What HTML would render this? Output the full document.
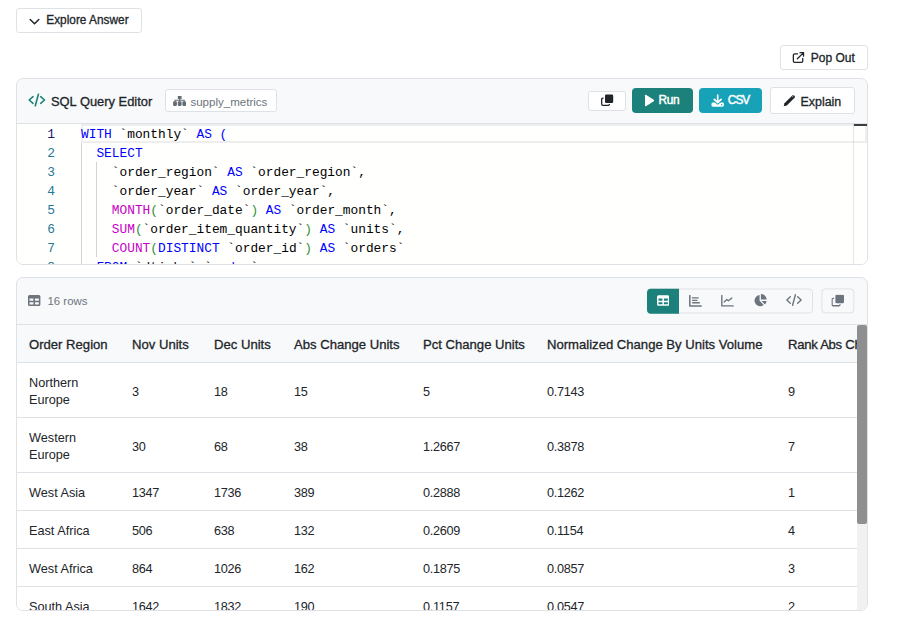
<!DOCTYPE html>
<html>
<head>
<meta charset="utf-8">
<style>
*{box-sizing:border-box;}
domain{display:none;}
html,body{margin:0;padding:0;background:#fff;}
body{width:901px;height:634px;overflow:hidden;position:relative;font-family:"Liberation Sans",sans-serif;color:#212529;font-size:13px;}
.abs{position:absolute;}
.btn{position:absolute;border:1px solid #dee2e6;border-radius:3px;background:#fff;white-space:nowrap;color:#212529;}
.t{position:absolute;white-space:nowrap;line-height:1;}
.sb{font-weight:normal;-webkit-text-stroke:0.3px;}
.card{position:absolute;left:16px;width:852px;border:1px solid #dee2e6;border-radius:7px;background:#f8f9fa;overflow:hidden;}
/* editor */
.ed{position:absolute;left:0;top:45px;width:850px;height:141px;background:#fffffe;font-family:"Liberation Mono",monospace;font-size:12.83px;}
.ln{position:absolute;left:0;width:38px;text-align:right;color:#237893;height:19px;line-height:19px;margin-top:1px;}
.cl{position:absolute;left:64px;height:19px;line-height:19px;white-space:pre;color:#000;margin-top:1px;}
.k{color:#0000ff;}
.f{color:#c700c7;}
.p{color:#319331;}
.g{position:absolute;width:1px;background:#d3d3d3;}
/* table */
.th{position:absolute;top:1px;height:37px;line-height:37px;font-weight:normal;-webkit-text-stroke:0.3px;white-space:nowrap;color:#212529;}
.row{position:absolute;left:0;width:840px;border-bottom:1px solid #dee2e6;background:#fff;}
.c{position:absolute;margin-top:2px;white-space:nowrap;line-height:17px;color:#212529;letter-spacing:-0.28px;}
.c.x{letter-spacing:0;}
</style>
</head>
<body>

<!-- Explore Answer -->
<div class="btn" style="left:16px;top:8px;width:126px;height:25px;">
  <svg class="abs" style="left:11.6px;top:8.85px;" width="11" height="8" viewBox="0 0 11 8"><path d="M1.2 1.5 L5.5 5.8 L9.8 1.5" fill="none" stroke="#212529" stroke-width="1.5" stroke-linecap="round" stroke-linejoin="round"/></svg>
  <span class="t sb" id="t_explore" style="left:29.3px;top:6.4px;font-size:11.85px;">Explore Answer</span>
</div>

<!-- Pop Out -->
<div class="btn" style="left:780px;top:45px;width:88px;height:25px;">
  <svg class="abs" style="left:11px;top:5px;" width="13" height="13" viewBox="0 0 13 13"><path d="M5.6 2.95 H2.75 Q1.35 2.95 1.35 4.35 V9.95 Q1.35 11.35 2.75 11.35 H9.35 Q10.75 11.35 10.75 9.95 V7.4" fill="none" stroke="#212529" stroke-width="1.3" stroke-linecap="round"/><path d="M8 1.65 H11.55 V5.2 M11.3 1.9 L5.4 7.8" fill="none" stroke="#212529" stroke-width="1.3" stroke-linecap="round" stroke-linejoin="round"/></svg>
  <span class="t sb" id="t_pop" style="left:29.8px;top:5.5px;font-size:12px;">Pop Out</span>
</div>

<!-- SQL card -->
<div class="card" style="top:78px;height:187px;">
  <div class="abs" style="left:0;top:0;width:850px;height:45px;border-bottom:1px solid #dee2e6;"></div>
  <svg class="abs" style="left:11px;top:14px;" width="18" height="14" viewBox="0 0 18 14"><path d="M5 3.7 L1.2 7 L5 10.3 M12.7 3.7 L16.5 7 L12.7 10.3 M10.4 1.2 L7.3 12.8" fill="none" stroke="#1b817a" stroke-width="1.6" stroke-linecap="round" stroke-linejoin="round"/></svg>
  <span class="t sb" id="t_sql" style="left:34px;top:16.6px;font-size:12.9px;">SQL Query Editor</span>
  <div class="abs" style="left:148px;top:10px;width:112px;height:23px;border:1px solid #dee2e6;border-radius:3px;background:#fff;">
    <svg class="abs" style="left:7px;top:6px;" width="13.2" height="10" viewBox="0 0 13.2 10"><path d="M4.8 0h3.8v3h-3.8z M6.15 2.9h1.1v2.6h-1.1z M1.5 3.8h10.3v1h-10.3z M1.5 3.8h1v1.8h-1z M10.8 3.8h1v1.8h-1z" fill="#646c74"/><rect x=".1" y="5.3" width="3.8" height="4.7" rx="1.2" fill="#646c74"/><rect x="4.8" y="5.3" width="3.8" height="4.7" rx="1.2" fill="#646c74"/><rect x="9.4" y="5.3" width="3.8" height="4.7" rx="1.2" fill="#646c74"/></svg>
    <span class="t" id="t_badge" style="left:24.4px;top:6.7px;font-size:11.55px;color:#6c757d;">supply_metrics</span>
  </div>

  <!-- copy btn -->
  <div class="abs" style="left:571px;top:12px;width:38px;height:20px;border:1px solid #dee2e6;border-radius:3px;background:#fff;">
    <svg class="abs" style="left:12px;top:2px;" width="13" height="13" viewBox="0 0 13 13"><rect x="4" y=".4" width="8.2" height="8.6" rx="1.3" fill="#212529"/><path d="M2.6 4.2 H1.9 Q.65 4.2 .65 5.45 V10.1 Q.65 11.35 1.9 11.35 H7.2 Q8.45 11.35 8.45 10.1 V9.9" fill="none" stroke="#212529" stroke-width="1.3"/></svg>
  </div>
  <!-- Run -->
  <div class="abs" style="left:615px;top:9px;width:61px;height:25px;border-radius:4px;background:#1b817a;">
    <svg class="abs" style="left:11.8px;top:6px;" width="11" height="13" viewBox="0 0 11 13"><path d="M1 1.3 Q1 .3 1.9 .8 L9.8 5.7 Q10.6 6.5 9.8 7.3 L1.9 12.2 Q1 12.7 1 11.7 Z" fill="#fff"/></svg>
    <span class="t sb" id="t_run" style="left:26.5px;top:7.2px;font-size:11.9px;letter-spacing:-0.35px;color:#fff;-webkit-text-stroke:0.45px;">Run</span>
  </div>
  <!-- CSV -->
  <div class="abs" style="left:682px;top:9px;width:63px;height:25px;border-radius:4px;background:#17a2b8;">
    <svg class="abs" style="left:12px;top:6px;" width="13" height="13" viewBox="0 0 13 13"><path d="M1.9 8.6 H11.5 Q12.9 8.6 12.9 10 V11.3 Q12.9 12.7 11.5 12.7 H1.9 Q.5 12.7 .5 11.3 V10 Q.5 8.6 1.9 8.6Z" fill="#fff"/><path d="M6.7 1 V8.4 M3.3 5.3 L6.7 8.7 L10.1 5.3" fill="none" stroke="#17a2b8" stroke-width="3.4" stroke-linecap="round" stroke-linejoin="round"/><path d="M6.7 1 V8.4 M3.3 5.3 L6.7 8.7 L10.1 5.3" fill="none" stroke="#fff" stroke-width="1.7" stroke-linecap="round" stroke-linejoin="round"/><circle cx="10.7" cy="10.8" r=".7" fill="#17a2b8"/></svg>
    <span class="t sb" id="t_csv" style="left:28.8px;top:7.2px;font-size:11.9px;letter-spacing:-1px;color:#fff;-webkit-text-stroke:0.45px;">CSV</span>
  </div>
  <!-- Explain -->
  <div class="btn" style="left:753px;top:8px;width:85px;height:27px;">
    <svg class="abs" style="left:12px;top:6.2px;" width="13" height="13" viewBox="0 0 13 13"><path d="M.7 12.3 L1.5 9.2 L9.3 1.4 Q10.2 .6 11.1 1.4 L11.6 1.9 Q12.4 2.8 11.6 3.7 L3.8 11.5 Z" fill="#212529"/><path d="M9.2 3 L10.4 1.9" stroke="#cfd2d5" stroke-width=".7" fill="none" stroke-linecap="round"/></svg>
    <span class="t sb" id="t_explain" style="left:29.5px;top:7.9px;font-size:12.41px;">Explain</span>
  </div>

  <!-- Editor -->
  <div class="ed" id="editor">
    <div class="abs" style="left:64px;top:0;width:786px;height:19px;border:2px solid #eeeeee;"></div>
    <div class="g" style="left:64px;top:19px;height:122px;"></div>
    <div class="g" style="left:79px;top:38px;height:95px;"></div>
    <div class="ln" style="top:0;color:#0b216f;">1</div>
    <div class="ln" style="top:19px;">2</div>
    <div class="ln" style="top:38px;">3</div>
    <div class="ln" style="top:57px;">4</div>
    <div class="ln" style="top:76px;">5</div>
    <div class="ln" style="top:95px;">6</div>
    <div class="ln" style="top:114px;">7</div>
    <div class="ln" style="top:133px;">8</div>
    <div class="cl" style="top:0;"><span class="k">WITH</span> `monthly` <span class="k">AS</span> <span class="k">(</span></div>
    <div class="cl" style="top:19px;">  <span class="k">SELECT</span></div>
    <div class="cl" style="top:38px;">    `order_region` <span class="k">AS</span> `order_region`,</div>
    <div class="cl" style="top:57px;">    `order_year` <span class="k">AS</span> `order_year`,</div>
    <div class="cl" style="top:76px;">    <span class="f">MONTH</span><span class="p">(</span>`order_date`<span class="p">)</span> <span class="k">AS</span> `order_month`,</div>
    <div class="cl" style="top:95px;">    <span class="f">SUM</span><span class="p">(</span>`order_item_quantity`<span class="p">)</span> <span class="k">AS</span> `units`,</div>
    <div class="cl" style="top:114px;">    <span class="f">COUNT</span><span class="p">(</span><span class="k">DISTINCT</span> `order_id`<span class="p">)</span> <span class="k">AS</span> `orders`</div>
    <div class="cl" style="top:133px;">  <span class="k">FROM</span> `dtimbr`.`<span class="k">order</span>`</div>
    <!-- overview ruler -->
    <div class="abs" style="left:836px;top:0;width:1px;height:141px;background:rgba(127,127,127,.2);"></div>
    <div class="abs" style="left:837px;top:0;width:13px;height:2px;background:#3c3c3c;"></div>
  </div>
</div>

<!-- Results card -->
<div class="card" style="top:277px;height:334px;">
  <div class="abs" style="left:0;top:0;width:850px;height:47px;border-bottom:1px solid #dee2e6;"></div>
  <svg class="abs" style="left:11.2px;top:17.1px;" width="12.4" height="11" viewBox="0 0 13 11" preserveAspectRatio="none"><path d="M1.6 0 H11.4 Q13 0 13 1.6 V9.4 Q13 11 11.4 11 H1.6 Q0 11 0 9.4 V1.6 Q0 0 1.6 0 Z M1.6 3.4 V5.7 H5.7 V3.4 Z M7.3 3.4 V5.7 H11.4 V3.4 Z M1.6 7.2 V9.4 H5.7 V7.2 Z M7.3 7.2 V9.4 H11.4 V7.2 Z" fill="#6c757d" fill-rule="evenodd"/></svg>
  <span class="t" id="t_rows" style="left:30.5px;top:17.5px;font-size:11.42px;color:#6c757d;">16 rows</span>

  <!-- toolbar group -->
  <div class="abs" style="left:630px;top:10px;transform:translateY(.5px);width:166px;height:25px;border:1px solid #dee2e6;border-radius:4px;background:#f8f9fa;"></div>
  <div class="abs" style="left:630px;top:10px;transform:translateY(.7px);width:32px;height:24.5px;border-radius:4px 0 0 4px;background:#1b817a;"></div>
  <div class="abs" id="tg" style="left:631px;top:11.5px;width:0;height:0;">
    <svg class="abs" style="left:8.8px;top:5.4px;" width="12.4" height="11.2" viewBox="0 0 13 11"><path d="M1.6 0 H11.4 Q13 0 13 1.6 V9.4 Q13 11 11.4 11 H1.6 Q0 11 0 9.4 V1.6 Q0 0 1.6 0 Z M1.6 3.4 V5.7 H5.7 V3.4 Z M7.3 3.4 V5.7 H11.4 V3.4 Z M1.6 7.2 V9.4 H5.7 V7.2 Z M7.3 7.2 V9.4 H11.4 V7.2 Z" fill="#fff" fill-rule="evenodd"/></svg>
    <svg class="abs" style="left:40.7px;top:5px;" width="13" height="12" viewBox="0 0 13 12"><path d="M.8 .5 V10.9 H12.2" fill="none" stroke="#6c757d" stroke-width="1.5" stroke-linecap="round" stroke-linejoin="round"/><path d="M3.4 2.9 H9.2 M3.6 5.3 H8 M3.6 7.7 H10.4" fill="none" stroke="#6c757d" stroke-width="1.35" stroke-linecap="round"/></svg>
    <svg class="abs" style="left:72.8px;top:5px;" width="13" height="12" viewBox="0 0 13 12"><path d="M.8 .5 V10.9 H12.2" fill="none" stroke="#6c757d" stroke-width="1.4" stroke-linecap="round" stroke-linejoin="round"/><path d="M3.2 6.9 L5.8 4.4 L7.5 5.8 L10.8 3" fill="none" stroke="#6c757d" stroke-width="1.35" stroke-linecap="round" stroke-linejoin="round"/></svg>
    <svg class="abs" style="left:105.7px;top:4.8px;" width="13" height="13" viewBox="0 0 13 13"><path d="M5.6 1 A5.6 5.6 0 1 0 9.7 10.9 L5.6 6.8 Z" fill="#6c757d"/><path d="M6.9 0 A5.8 5.8 0 0 1 12.7 5.6 H6.9 Z" fill="#6c757d"/><path d="M7.6 7 H12.6 A5.6 5.6 0 0 1 11 10.4 Z" fill="#6c757d"/></svg>
    <svg class="abs" style="left:138.2px;top:4.7px;" width="16" height="12" viewBox="0 0 16 12"><path d="M4.3 2.8 L.9 6 L4.3 9.2 M11.7 2.8 L15.1 6 L11.7 9.2 M9.4 .8 L6.6 11.2" fill="none" stroke="#6c757d" stroke-width="1.4" stroke-linecap="round" stroke-linejoin="round"/></svg>
  </div>
  <div class="abs" style="left:804px;top:10px;transform:translate(.4px,.4px);width:33px;height:25px;border:1px solid #dee2e6;border-radius:4px;background:#f8f9fa;">
    <svg class="abs" style="left:9.4px;top:5px;" width="13" height="13" viewBox="0 0 13 13"><rect x="4" y=".4" width="8.6" height="8.4" rx="1.3" fill="#6c757d"/><path d="M2.6 3.9 H1.9 Q.65 3.9 .65 5.15 V10.1 Q.65 11.35 1.9 11.35 H7.4 Q8.65 11.35 8.65 10.1 V9.9" fill="none" stroke="#6c757d" stroke-width="1.3"/></svg>
  </div>

  <!-- Table -->
  <div class="abs" id="tbl" style="left:0;top:47px;width:850px;height:285px;background:#fff;overflow:hidden;font-size:12.7px;">
    <div class="abs" style="left:0;top:0;width:840px;height:38px;background:#f8f9fa;border-bottom:1px solid #dee2e6;font-size:13.1px;">
      <span class="th" id="th0" style="left:12px;">Order Region</span>
      <span class="th" id="th1" style="left:115px;">Nov Units</span>
      <span class="th" id="th2" style="left:197px;">Dec Units</span>
      <span class="th" id="th3" style="left:277px;">Abs Change Units</span>
      <span class="th" id="th4" style="left:406px;">Pct Change Units</span>
      <span class="th" id="th5" style="left:530px;">Normalized Change By Units Volume</span>
      <span class="th" id="th6" style="left:771px;letter-spacing:-0.27px;">Rank Abs Change</span>
    </div>

    <div class="row" style="top:38px;height:55px;">
      <span class="c x" style="left:12px;top:10px;white-space:normal;width:80px;">Northern<br>Europe</span>
      <span class="c" style="left:115px;top:19px;">3</span><span class="c" style="left:197px;top:19px;">18</span><span class="c" style="left:277px;top:19px;">15</span><span class="c" style="left:406px;top:19px;">5</span><span class="c" style="left:530px;top:19px;">0.7143</span><span class="c" style="left:771px;top:19px;">9</span>
    </div>
    <div class="row" style="top:93px;height:55px;">
      <span class="c x" style="left:12px;top:10px;white-space:normal;width:80px;">Western<br>Europe</span>
      <span class="c" style="left:115px;top:19px;">30</span><span class="c" style="left:197px;top:19px;">68</span><span class="c" style="left:277px;top:19px;">38</span><span class="c" style="left:406px;top:19px;">1.2667</span><span class="c" style="left:530px;top:19px;">0.3878</span><span class="c" style="left:771px;top:19px;">7</span>
    </div>
    <div class="row" style="top:148px;height:38px;">
      <span class="c x" style="left:12px;top:10px;">West Asia</span>
      <span class="c" style="left:115px;top:10px;">1347</span><span class="c" style="left:197px;top:10px;">1736</span><span class="c" style="left:277px;top:10px;">389</span><span class="c" style="left:406px;top:10px;">0.2888</span><span class="c" style="left:530px;top:10px;">0.1262</span><span class="c" style="left:771px;top:10px;">1</span>
    </div>
    <div class="row" style="top:186px;height:38px;">
      <span class="c x" style="left:12px;top:10px;">East Africa</span>
      <span class="c" style="left:115px;top:10px;">506</span><span class="c" style="left:197px;top:10px;">638</span><span class="c" style="left:277px;top:10px;">132</span><span class="c" style="left:406px;top:10px;">0.2609</span><span class="c" style="left:530px;top:10px;">0.1154</span><span class="c" style="left:771px;top:10px;">4</span>
    </div>
    <div class="row" style="top:224px;height:38px;">
      <span class="c x" style="left:12px;top:10px;">West Africa</span>
      <span class="c" style="left:115px;top:10px;">864</span><span class="c" style="left:197px;top:10px;">1026</span><span class="c" style="left:277px;top:10px;">162</span><span class="c" style="left:406px;top:10px;">0.1875</span><span class="c" style="left:530px;top:10px;">0.0857</span><span class="c" style="left:771px;top:10px;">3</span>
    </div>
    <div class="row" style="top:262px;height:38px;">
      <span class="c x" style="left:12px;top:10px;">South Asia</span>
      <span class="c" style="left:115px;top:10px;">1642</span><span class="c" style="left:197px;top:10px;">1832</span><span class="c" style="left:277px;top:10px;">190</span><span class="c" style="left:406px;top:10px;">0.1157</span><span class="c" style="left:530px;top:10px;">0.0547</span><span class="c" style="left:771px;top:10px;">2</span>
    </div>

    <!-- scrollbar -->
    <div class="abs" style="left:840px;top:0;width:10px;height:285px;background:#f1f1f1;"></div>
    <div class="abs" style="left:840px;top:0;width:10px;height:199px;background:#8f8f8f;border-radius:2px;"></div>
  </div>
</div>

</body>
</html>
